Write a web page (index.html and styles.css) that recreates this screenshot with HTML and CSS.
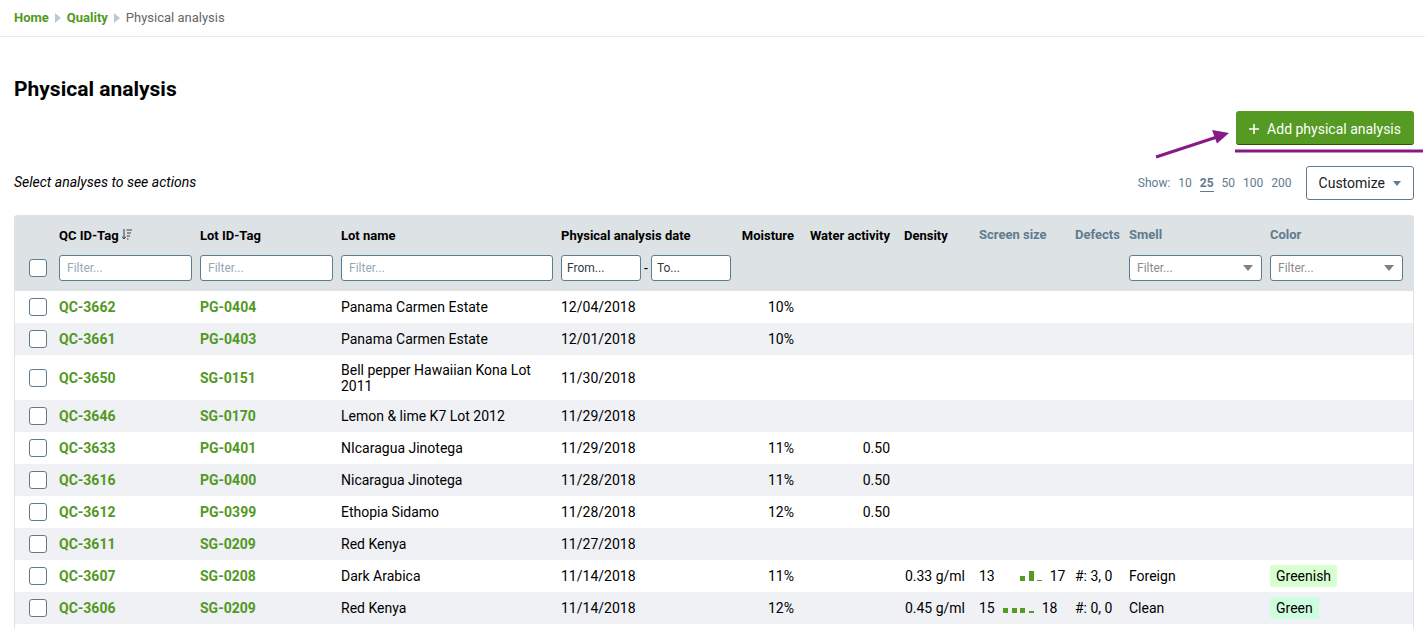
FILE: index.html
```
<!DOCTYPE html>
<html lang="en">
<head>
    <meta charset="UTF-8">
    <meta name="viewport" content="width=device-width, initial-scale=1.0">
    <title>Physical analysis</title>
    <link rel="stylesheet" href="styles.css">
</head>
<body>
    <nav class="breadcrumb" aria-label="Breadcrumb">
        <a href="#">Home</a>
        <span class="crumb-arrow"></span>
        <a href="#">Quality</a>
        <span class="crumb-arrow"></span>
        <span>Physical analysis</span>
    </nav>

    <main class="content">
        <h1>Physical analysis</h1>

        <div class="actions">
            <button class="btn btn-primary" type="button">
                <svg width="10" height="10" viewBox="0 0 10 10" aria-hidden="true"><path d="M5 0v10M0 5h10" stroke="#fff" stroke-width="1.6"/></svg>
                Add physical analysis
            </button>
            <svg class="pointer" width="268" height="32" viewBox="0 0 268 32" aria-hidden="true">
                <path d="M1 30L62 10" stroke="#881a88" stroke-width="3"/>
                <path d="M74 6L57 3L62 16.500z" fill="#881a88"/>
                <path d="M80 24h188" stroke="#881a88" stroke-width="3"/>
            </svg>
        </div>

        <div class="toolbar">
            <p class="hint">Select analyses to see actions</p>
            <div class="page-size">
                <span>Show:</span>
                <a href="#">10</a>
                <a href="#" class="current">25</a>
                <a href="#">50</a>
                <a href="#">100</a>
                <a href="#">200</a>
            </div>
            <button class="btn btn-outline" type="button">Customize <span class="caret"></span></button>
        </div>

        <div class="table-box">
            <table>
                <colgroup>
                    <col class="col-check">
                    <col class="col-tag">
                    <col class="col-tag">
                    <col class="col-name">
                    <col class="col-date">
                    <col class="col-moisture">
                    <col class="col-water">
                    <col class="col-density">
                    <col class="col-screen">
                    <col class="col-defects">
                    <col class="col-smell">
                    <col class="col-color">
                </colgroup>
                <thead>
                    <tr class="titles">
                        <td></td>
                        <th>QC ID-Tag <svg width="10" height="11" viewBox="0 0 10 11" aria-hidden="true"><path d="M2 0v10M0 7.500L2 10L4 7.500M4.500 1h5.500M5 4h4M5 7h3M5 10h1.500" fill="none" stroke="#333c46" stroke-width="1"/></svg></th>
                        <th>Lot ID-Tag</th>
                        <th>Lot name</th>
                        <th>Physical analysis date</th>
                        <th class="num">Moisture</th>
                        <th class="num">Water activity</th>
                        <th class="wide">Density</th>
                        <th class="wide plain">Screen size</th>
                        <th class="plain">Defects</th>
                        <th class="plain">Smell</th>
                        <th class="plain">Color</th>
                    </tr>
                    <tr class="filters">
                        <td class="check"><input type="checkbox" aria-label="Select all"></td>
                        <td><input type="text" placeholder="Filter..." aria-label="Filter QC ID-Tag"></td>
                        <td><input type="text" placeholder="Filter..." aria-label="Filter Lot ID-Tag"></td>
                        <td><input type="text" placeholder="Filter..." aria-label="Filter Lot name"></td>
                        <td>
                            <div class="range">
                                <input type="text" placeholder="From..." aria-label="Date from">
                                <span>-</span>
                                <input type="text" placeholder="To..." aria-label="Date to">
                            </div>
                        </td>
                        <td></td>
                        <td></td>
                        <td></td>
                        <td></td>
                        <td></td>
                        <td><div class="select"><select aria-label="Filter Smell"><option>Filter...</option></select></div></td>
                        <td><div class="select"><select aria-label="Filter Color"><option>Filter...</option></select></div></td>
                    </tr>
                </thead>
                <tbody>
                    <tr>
                        <td class="check"><input type="checkbox" aria-label="Select QC-3662"></td>
                        <td><a href="#">QC-3662</a></td>
                        <td><a href="#">PG-0404</a></td>
                        <td>Panama Carmen Estate</td>
                        <td>12/04/2018</td>
                        <td class="num">10%</td>
                        <td></td><td></td><td></td><td></td><td></td><td></td>
                    </tr>
                    <tr>
                        <td class="check"><input type="checkbox" aria-label="Select QC-3661"></td>
                        <td><a href="#">QC-3661</a></td>
                        <td><a href="#">PG-0403</a></td>
                        <td>Panama Carmen Estate</td>
                        <td>12/01/2018</td>
                        <td class="num">10%</td>
                        <td></td><td></td><td></td><td></td><td></td><td></td>
                    </tr>
                    <tr class="two-line">
                        <td class="check"><input type="checkbox" aria-label="Select QC-3650"></td>
                        <td><a href="#">QC-3650</a></td>
                        <td><a href="#">SG-0151</a></td>
                        <td>Bell pepper Hawaiian Kona Lot 2011</td>
                        <td>11/30/2018</td>
                        <td></td><td></td><td></td><td></td><td></td><td></td><td></td>
                    </tr>
                    <tr>
                        <td class="check"><input type="checkbox" aria-label="Select QC-3646"></td>
                        <td><a href="#">QC-3646</a></td>
                        <td><a href="#">SG-0170</a></td>
                        <td>Lemon &amp; lime K7 Lot 2012</td>
                        <td>11/29/2018</td>
                        <td></td><td></td><td></td><td></td><td></td><td></td><td></td>
                    </tr>
                    <tr>
                        <td class="check"><input type="checkbox" aria-label="Select QC-3633"></td>
                        <td><a href="#">QC-3633</a></td>
                        <td><a href="#">PG-0401</a></td>
                        <td>NIcaragua Jinotega</td>
                        <td>11/29/2018</td>
                        <td class="num">11%</td>
                        <td class="num">0.50</td>
                        <td></td><td></td><td></td><td></td><td></td>
                    </tr>
                    <tr>
                        <td class="check"><input type="checkbox" aria-label="Select QC-3616"></td>
                        <td><a href="#">QC-3616</a></td>
                        <td><a href="#">PG-0400</a></td>
                        <td>Nicaragua Jinotega</td>
                        <td>11/28/2018</td>
                        <td class="num">11%</td>
                        <td class="num">0.50</td>
                        <td></td><td></td><td></td><td></td><td></td>
                    </tr>
                    <tr>
                        <td class="check"><input type="checkbox" aria-label="Select QC-3612"></td>
                        <td><a href="#">QC-3612</a></td>
                        <td><a href="#">PG-0399</a></td>
                        <td>Ethopia Sidamo</td>
                        <td>11/28/2018</td>
                        <td class="num">12%</td>
                        <td class="num">0.50</td>
                        <td></td><td></td><td></td><td></td><td></td>
                    </tr>
                    <tr>
                        <td class="check"><input type="checkbox" aria-label="Select QC-3611"></td>
                        <td><a href="#">QC-3611</a></td>
                        <td><a href="#">SG-0209</a></td>
                        <td>Red Kenya</td>
                        <td>11/27/2018</td>
                        <td></td><td></td><td></td><td></td><td></td><td></td><td></td>
                    </tr>
                    <tr>
                        <td class="check"><input type="checkbox" aria-label="Select QC-3607"></td>
                        <td><a href="#">QC-3607</a></td>
                        <td><a href="#">SG-0208</a></td>
                        <td>Dark Arabica</td>
                        <td>11/14/2018</td>
                        <td class="num">11%</td>
                        <td></td>
                        <td class="num">0.33 g/ml</td>
                        <td class="wide">13<svg class="bars" width="39" height="10" viewBox="0 0 39 10" aria-hidden="true"><path d="M17 5h5v5h-5zM26 0h5v10h-5zM34 9h5v1h-5z"/></svg>17</td>
                        <td>#: 3, 0</td>
                        <td>Foreign</td>
                        <td><span class="tag greenish">Greenish</span></td>
                    </tr>
                    <tr>
                        <td class="check"><input type="checkbox" aria-label="Select QC-3606"></td>
                        <td><a href="#">QC-3606</a></td>
                        <td><a href="#">SG-0209</a></td>
                        <td>Red Kenya</td>
                        <td>11/14/2018</td>
                        <td class="num">12%</td>
                        <td></td>
                        <td class="num">0.45 g/ml</td>
                        <td class="wide">15<svg class="bars" width="31" height="10" viewBox="0 0 31 10" aria-hidden="true"><path d="M0 5h5v5h-5zM9 5h5v5h-5zM17 5h5v5h-5zM26 8h5v2h-5z"/></svg>18</td>
                        <td>#: 0, 0</td>
                        <td>Clean</td>
                        <td><span class="tag green">Green</span></td>
                    </tr>
                </tbody>
            </table>
        </div>
    </main>
</body>
</html>
```
FILE: styles.css
```
* {
    box-sizing: border-box;
}

body {
    margin: 0;
    font-family: Roboto, "Liberation Sans", sans-serif;
    font-size: 14px;
    line-height: 16px;
    color: #000;
    background: #fff;
}

a {
    color: #53981f;
    font-weight: 700;
    text-decoration: none;
}

a:hover {
    text-decoration: underline;
}

.breadcrumb {
    display: flex;
    align-items: center;
    gap: 6px;
    height: 37px;
    padding: 0 14px;
    border-bottom: 1px solid #e6eeec;
    font-size: 13px;
    color: #666;
}

.crumb-arrow {
    border: 5px solid transparent;
    border-left: 6px solid #bfc8d1;
    border-right: 0;
}

.content {
    padding: 40px 11px 0 14px;
}

h1 {
    margin: 0;
    font-size: 21px;
    line-height: 25px;
}

.actions {
    position: relative;
    display: flex;
    justify-content: flex-end;
    margin-top: 9px;
}

.pointer {
    position: absolute;
    top: 16px;
    right: -9px;
}

.btn {
    display: flex;
    align-items: center;
    gap: 8px;
    height: 34px;
    padding: 0 12px;
    border-radius: 3px;
    font-family: inherit;
    font-size: 14px;
    cursor: pointer;
}

.btn-primary {
    padding: 2px 13px 0;
    border: 0;
    border-bottom: 1px solid #28560a;
    background: #559a22;
    color: #fff;
}

.btn-outline {
    border: 1px solid #5f7b8e;
    background: #fff;
    color: #1b2025;
}

.caret {
    border: 4px solid transparent;
    border-top: 5px solid #5f7b8e;
    border-bottom: 0;
}

.toolbar {
    display: flex;
    align-items: center;
    gap: 14px;
    margin-top: 21px;
}

.hint {
    flex: 1;
    margin: 0;
    padding-bottom: 2px;
    font-style: italic;
}

.page-size {
    display: flex;
    gap: 8px;
    font-size: 12px;
    color: #5f7b8e;
}

.page-size a {
    color: inherit;
    font-weight: 400;
}

.page-size .current {
    border-bottom: 1px solid #5f7b8e;
    font-weight: 700;
}

.table-box {
    margin-top: 15px;
    padding-bottom: 5px;
    border: 1px solid #dde2e5;
    border-width: 0 1px;
    border-radius: 3px 3px 0 0;
    background: #fff;
    overflow: hidden;
}

table {
    width: 100%;
    table-layout: fixed;
    border-collapse: collapse;
}

.col-check { width: 40px; }
.col-tag { width: 141px; }
.col-date { width: 178px; }
.col-moisture { width: 63px; }
.col-water { width: 96px; }
.col-density { width: 75px; }
.col-screen { width: 102px; }
.col-defects { width: 54px; }
.col-smell { width: 141px; }
.col-color { width: 147px; }

th,
td {
    padding: 0 4px;
    text-align: left;
}

thead {
    background: #dde2e5;
}

.titles th {
    padding-top: 12px;
    height: 40px;
    padding-bottom: 11px;
    font-size: 13px;
    white-space: nowrap;
}

.titles .plain {
    padding-top: 11px;
    padding-bottom: 12px;
    color: #5f7b8e;
}

.filters td {
    height: 36px;
    padding-bottom: 10px;
}

.filters td:last-child {
    padding-right: 10px;
}

tbody td {
    height: 32px;
    padding-top: 6px;
    padding-bottom: 6px;
}

.two-line td {
    height: 45px;
}

tbody tr:nth-child(even) {
    background: #eff1f5;
}

td.check {
    padding: 0 0 0 14px;
}

.filters td.check {
    padding-bottom: 11px;
}

.num {
    text-align: right;
}

.wide {
    padding-left: 10px;
    white-space: nowrap;
}

input[type="checkbox"] {
    display: block;
    appearance: none;
    width: 18px;
    height: 18px;
    margin: 0;
    border: 1px solid #5f7b8e;
    border-radius: 3px;
    background: #fff;
}

input[type="checkbox"]:checked {
    background: #559a22;
}

input[type="text"],
select {
    display: block;
    appearance: none;
    width: 100%;
    height: 26px;
    padding: 0 7px;
    border: 1px solid #5f7b8e;
    border-radius: 3px;
    background: #fff;
    font-family: inherit;
    font-size: 12px;
}

input::placeholder {
    color: #98a9b8;
    opacity: 1;
}

.range {
    display: flex;
    align-items: center;
    gap: 3px;
}

.range input[type="text"] {
    flex: 1;
    min-width: 0;
    padding: 0 5px;
}

.range input::placeholder {
    color: #333c46;
}

.select {
    position: relative;
}

.select select {
    color: #8c8c8c;
}

.select::after {
    content: "";
    position: absolute;
    top: 10px;
    right: 9px;
    border: 5px solid transparent;
    border-top: 6px solid #808080;
    border-bottom: 0;
    pointer-events: none;
}

.bars {
    margin: 0 8px;
    fill: #559a22;
}

.tag {
    display: inline-block;
    margin: -3px 0;
    padding: 3px 6px;
    border-radius: 3px;
}

.greenish {
    background: #d7ffcf;
}

.green {
    background: #cffde0;
}
```
